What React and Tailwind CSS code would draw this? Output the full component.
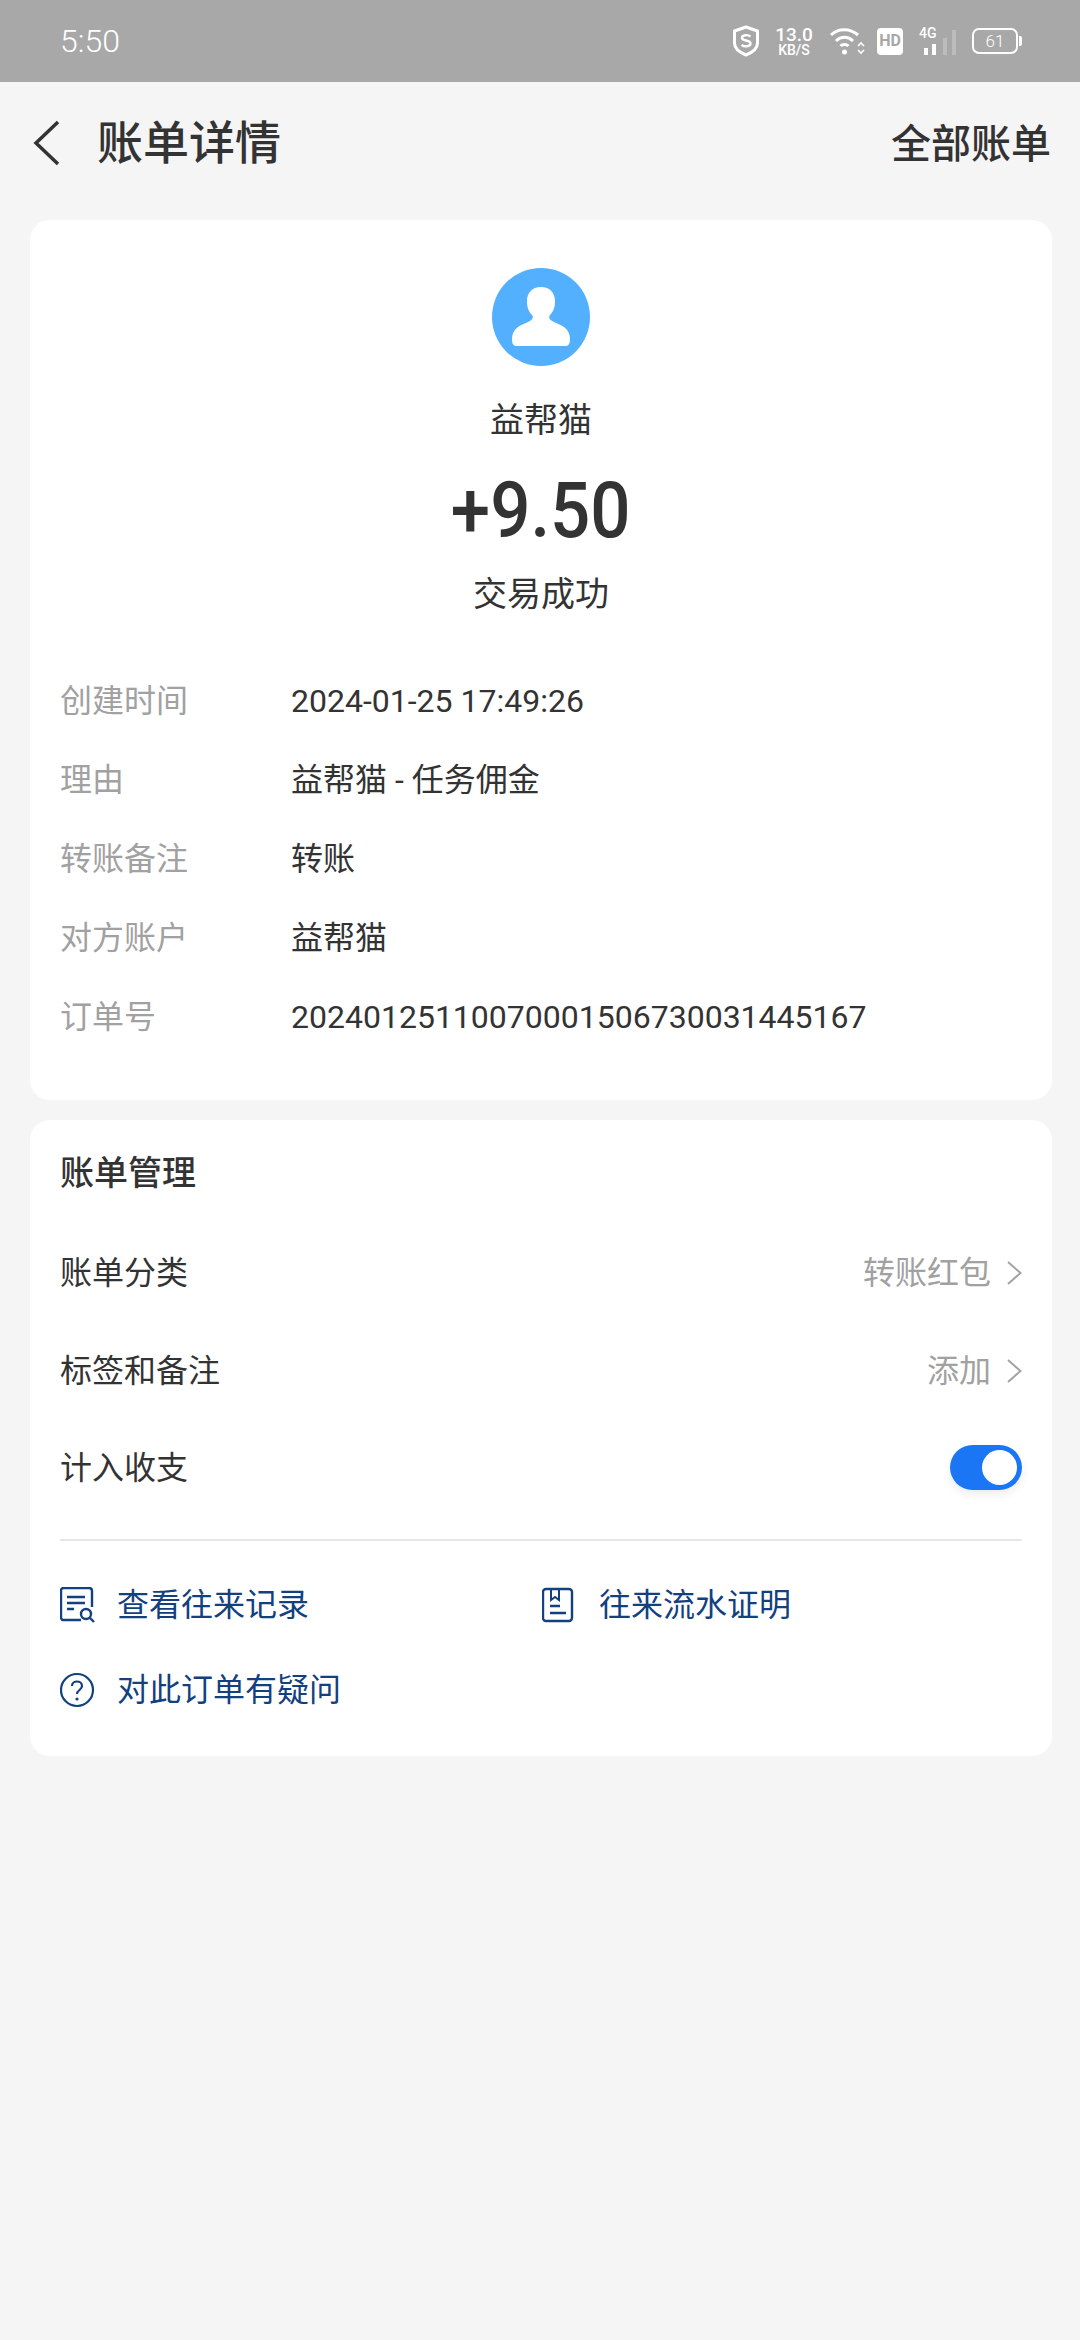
const font = { fontFamily: 'Roboto, "Noto Sans CJK SC", sans-serif' };

function Chevron() {
  return (
    <svg width="16" height="26" viewBox="0 0 16 26" fill="none" className="ml-[15px]">
      <path d="M2 2 L14.5 13 L2 24" stroke="#a3a3a3" strokeWidth="2" />
    </svg>
  );
}

function StatusIcons() {
  return (
    <div className="flex items-center text-white">
      <svg width="28" height="32" viewBox="0 0 28 32" fill="none" className="mr-[15px]">
        <path d="M14 2 L25.5 6 V18 C25.5 24 19 28 14 30 C9 28 2.5 24 2.5 18 V6 Z" stroke="#fff" strokeWidth="3" strokeLinejoin="round" />
        <path d="M18.5 11.5 C16 9.5 10 9.5 10 13 C10 16.5 18.5 14.5 18.5 18.5 C18.5 22 12 22 9.5 20" stroke="#fff" strokeWidth="2.4" />
      </svg>
      <div className="flex flex-col items-center w-[38px] mr-[17px] font-medium">
        <span className="text-[19px] leading-[18px]">13.0</span>
        <span className="text-[14px] leading-[13px]">KB/S</span>
      </div>
      <svg width="36" height="28" viewBox="0 0 36 28" fill="none" className="mr-[11px]">
        <path d="M1 8 C8 1 20 1 28 8" stroke="#fff" strokeWidth="3" />
        <path d="M6 14 C11 9 18 9 23 14" stroke="#fff" strokeWidth="3" />
        <path d="M10.5 19 C12.5 17 16.5 17 18.5 19" stroke="#fff" strokeWidth="3" />
        <circle cx="14.5" cy="25" r="2.5" fill="#fff" />
        <path d="M28 19 L31 16 L34 19 M28 23 L31 26 L34 23" stroke="#fff" strokeWidth="1.6" />
      </svg>
      <div className="w-[26px] h-[27px] rounded-[4px] bg-white flex items-center justify-center mr-[16px]">
        <span className="text-[16px] leading-none font-bold text-[#a8a8a8]">HD</span>
      </div>
      <div className="relative w-[38px] h-[27px] mr-[15px]">
        <span className="absolute left-0 top-[-4px] text-[14px] leading-[18px] font-medium">4G</span>
        <div className="absolute left-[5px] bottom-0 w-[4px] h-[7px] bg-white" />
        <div className="absolute left-[13px] bottom-0 w-[4px] h-[11px] bg-white" />
        <div className="absolute left-[24px] bottom-0 w-[4px] h-[17px] bg-[#bcbcbc]" />
        <div className="absolute left-[33px] bottom-0 w-[4px] h-[25px] bg-[#bcbcbc]" />
      </div>
      <div className="flex items-center">
        <div className="w-[46px] h-[26px] rounded-[7px] border-2 border-white flex items-center justify-center text-[17px] leading-none font-light">61</div>
        <div className="w-[3px] h-[10px] bg-white rounded-r-[2px] ml-[1px]" />
      </div>
    </div>
  );
}

function InfoRow({ label, value }) {
  return (
    <div className="flex items-center h-[79px]">
      <span className="w-[231px] text-[32px] text-[#a1a1a1]">{label}</span>
      <span className="text-[32px] text-[#333333]">{value}</span>
    </div>
  );
}

function LinkItem({ icon, text, className = "" }) {
  return (
    <div className={`flex items-center ${className}`}>
      {icon}
      <span className="ml-[21px] text-[32px] leading-[40px] text-[#13407f]">{text}</span>
    </div>
  );
}

export default function App() {
  return (
    <div className="w-[1080px] h-[2340px] bg-[#f5f5f5] flex flex-col" style={font}>
      <div className="h-[82px] bg-[#a8a8a8] flex items-center justify-between pl-[60px] pr-[58px] shrink-0">
        <span className="text-[32px] text-white font-light">5:50</span>
        <StatusIcons />
      </div>

      <div className="h-[122px] flex items-center justify-between pl-[33px] pr-[29px] shrink-0">
        <div className="flex items-center">
          <svg width="28" height="46" viewBox="0 0 28 46" fill="none">
            <path d="M25 2 L3 23 L25 44" stroke="#333333" strokeWidth="3.5" />
          </svg>
          <span className="ml-[36px] text-[46px] leading-[60px] font-medium text-[#333333]">账单详情</span>
        </div>
        <span className="text-[40px] leading-[60px] font-medium text-[#333333] relative top-[2px]">全部账单</span>
      </div>

      <div className="mt-[16px] mx-[30px] w-[1022px] h-[880px] rounded-[20px] bg-white px-[30px] pt-[48px] shrink-0">
        <div className="flex flex-col items-center">
          <svg width="98" height="98" viewBox="0 0 98 98">
            <circle cx="49" cy="49" r="49" fill="#52b0ff" />
            <path d="M49 19 C58 19 63 25 63 33 C63 40 61 44 58 47 C56 50 58 52 62 54 C69 57 78 60 78 71 C78 75 77 78 74 78 H24 C21 78 20 75 20 71 C20 60 29 57 36 54 C40 52 42 50 40 47 C37 44 35 40 35 33 C35 25 40 19 49 19 Z" fill="#fff" />
          </svg>
          <div className="mt-[31px] h-[46px] leading-[46px] text-[34px] text-[#333333]">益帮猫</div>
          <div className="mt-[23px] h-[90px] leading-[90px] text-[77px] font-medium text-[#333333] scale-x-[0.92]">+9.50</div>
          <div className="mt-[15px] h-[46px] leading-[46px] text-[34px] text-[#333333]">交易成功</div>
        </div>
        <div className="mt-[44px] flex flex-col">
          <InfoRow label="创建时间" value="2024-01-25 17:49:26" />
          <InfoRow label="理由" value="益帮猫 - 任务佣金" />
          <InfoRow label="转账备注" value="转账" />
          <InfoRow label="对方账户" value="益帮猫" />
          <InfoRow label="订单号" value="20240125110070001506730031445167" />
        </div>
      </div>

      <div className="mt-[20px] mx-[30px] w-[1022px] h-[636px] rounded-[20px] bg-white px-[30px] pt-[28px] shrink-0">
        <div className="h-[50px] leading-[50px] text-[34px] font-medium text-[#333333]">账单管理</div>
        <div className="mt-[50px] h-[50px] flex items-center justify-between">
          <span className="text-[32px] text-[#333333]">账单分类</span>
          <div className="flex items-center">
            <span className="text-[32px] text-[#a1a1a1]">转账红包</span>
            <Chevron />
          </div>
        </div>
        <div className="mt-[48px] h-[50px] flex items-center justify-between">
          <span className="text-[32px] text-[#333333]">标签和备注</span>
          <div className="flex items-center">
            <span className="text-[32px] text-[#a1a1a1]">添加</span>
            <Chevron />
          </div>
        </div>
        <div className="mt-[47px] h-[50px] flex items-center justify-between">
          <span className="text-[32px] text-[#333333]">计入收支</span>
          <div className="mb-[2px] w-[72px] h-[45px] rounded-full bg-[#1a76f5] flex items-center justify-end pr-[5px] shadow-[0_4px_10px_rgba(0,0,0,0.08)]">
            <div className="w-[35px] h-[35px] rounded-full bg-white" />
          </div>
        </div>
        <div className="mt-[46px] h-[2px] bg-[#e6e6e6]" />
        <div className="mt-[44px] flex">
          <LinkItem
            className="w-[482px]"
            text="查看往来记录"
            icon={
              <svg width="36" height="36" viewBox="0 0 36 36" fill="none" className="shrink-0">
                <path d="M21 33 H4 C2 33 1 32 1 30 V4 C1 2 2 1 4 1 H29 C31 1 32 2 32 4 V20" stroke="#13407f" strokeWidth="2.4" />
                <path d="M7 10 H25 M7 16 H25 M7 22 H14" stroke="#13407f" strokeWidth="2.4" />
                <circle cx="26" cy="27" r="5" stroke="#13407f" strokeWidth="2.4" />
                <path d="M30 31 L34 35" stroke="#13407f" strokeWidth="2.4" />
              </svg>
            }
          />
          <LinkItem
            text="往来流水证明"
            icon={
              <svg width="36" height="36" viewBox="0 0 36 36" fill="none" className="shrink-0">
                <rect x="1" y="2" width="29" height="32" rx="3" stroke="#13407f" strokeWidth="2.4" />
                <path d="M9 2 V13 L13 10 L17 13 V2" stroke="#13407f" strokeWidth="2" />
                <path d="M8 19 H18 M8 26 H24" stroke="#13407f" strokeWidth="2.4" />
              </svg>
            }
          />
        </div>
        <LinkItem
          className="mt-[45px]"
          text="对此订单有疑问"
          icon={
            <svg width="36" height="36" viewBox="0 0 36 36" fill="none" className="shrink-0">
              <circle cx="17" cy="18" r="16" stroke="#13407f" strokeWidth="2.2" />
              <path d="M12 14 C12 8 22 8 22 14 C22 18 17 18 17 22" stroke="#13407f" strokeWidth="2.2" />
              <circle cx="17" cy="27" r="1.6" fill="#13407f" />
            </svg>
          }
        />
      </div>
    </div>
  );
}
